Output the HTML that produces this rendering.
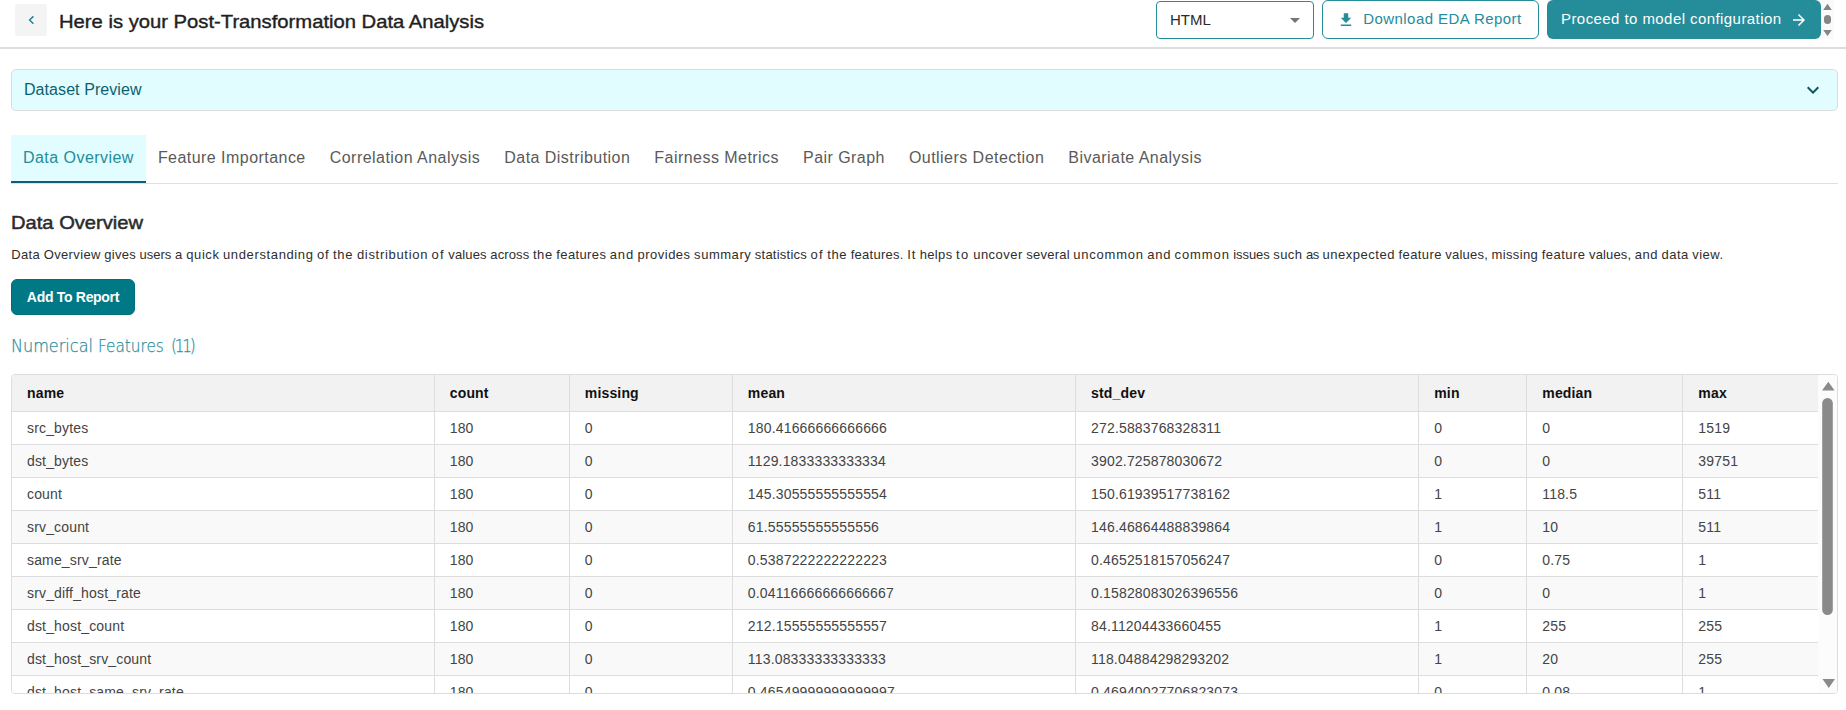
<!DOCTYPE html>
<html lang="en">
<head>
<meta charset="utf-8">
<title>Post-Transformation Data Analysis</title>
<style>
*{box-sizing:border-box;margin:0;padding:0}
html,body{width:1846px;height:710px;overflow:hidden;background:#fff}
body{position:relative;font-family:"Liberation Sans",Arial,sans-serif;color:#333}
.abs{position:absolute}
/* header */
#hdr{position:absolute;left:0;top:0;width:1846px;height:49px;background:#fff;border-bottom:2px solid #ddd}
#back{position:absolute;left:15px;top:4px;width:32px;height:32px;background:#f4f4f4;border-radius:3px}
#back svg{position:absolute;left:12px;top:10px}
#title{position:absolute;left:59px;top:7.6px;height:28px;line-height:28px;font-size:19px;font-weight:normal;-webkit-text-stroke:.4px #1f1f1f;color:#1f1f1f;white-space:nowrap;transform:scaleX(1.064);transform-origin:0 0}
#sel{position:absolute;left:1156px;top:1px;width:158px;height:38px;border:1px solid #258c9a;border-radius:4px;background:#fff}
#sel span{position:absolute;left:13px;top:0;line-height:36px;font-size:15px;color:#2a2a2a}
#sel i{position:absolute;left:133px;top:17px;margin-top:-1px;width:0;height:0;border-left:5px solid transparent;border-right:5px solid transparent;border-top:5px solid #757575}
#dl{position:absolute;left:1322px;top:0;width:217px;height:39px;border:1px solid #258c9a;border-radius:6px;background:#fff;color:#258c9a}
#dl svg{position:absolute;left:14px;top:9.7px}
#dl span{position:absolute;left:40.3px;top:0;line-height:36px;font-size:15px;white-space:nowrap;letter-spacing:.4286px}
#go{position:absolute;left:1547px;top:0;width:274px;height:39px;border-radius:6px;background:#258c9a;color:#fff}
#go span{position:absolute;left:14px;top:0;line-height:37.6px;font-size:15px;white-space:nowrap;letter-spacing:.4286px}
#go svg{position:absolute;left:243px;top:11px}
#sb0{position:absolute;left:1821px;top:0;width:13px;height:39px;background:#fafafa}
/* panel */
#panel{position:absolute;left:11px;top:69px;width:1827px;height:42px;background:#e1fdff;border:1px solid #dcdcdc;border-radius:5px}
#panel span{position:absolute;left:12px;top:0;line-height:39px;font-size:16px;letter-spacing:.07px;color:#0d6170;white-space:nowrap}
#panel svg{position:absolute;left:1789px;top:8px}
/* tabs */
#tabs{position:absolute;left:11px;top:135px;width:1827px;height:49px;border-bottom:1px solid #e0e0e0;white-space:nowrap;font-size:0}
.tab{display:inline-block;height:48px;line-height:45px;padding:0 12px;font-size:16px;letter-spacing:.457px;color:#5a5a5a}
.tab.on{background:#e1fdff;color:#258c9a;border-bottom:2px solid #0d5f73;line-height:45px}
h2{position:absolute;left:11px;top:209px;font-size:19px;line-height:28px;font-weight:normal;-webkit-text-stroke:.5px #2b2b2b;color:#2b2b2b;white-space:nowrap;transform:scaleX(1.06);transform-origin:0 0}
#desc{position:absolute;left:-.7px;top:245.6px;width:1846px;height:18px;font-size:13px;line-height:18px;color:#2e2e2e;white-space:nowrap}
#desc span{position:absolute;top:0}
#add{position:absolute;left:11px;top:279px;width:124px;height:36px;border-radius:6px;background:#007986;border:1px solid #006f7c;color:#fff;font-weight:bold;font-size:14px;letter-spacing:-.3px;line-height:35.4px;text-align:center;white-space:nowrap}
#nf{position:absolute;left:0;top:333px;width:300px;height:26px;font-family:"DejaVu Sans Light","DejaVu Sans","Liberation Sans",sans-serif;font-weight:200;font-size:17px;line-height:26px;color:#2a8f9e;-webkit-text-stroke:.25px #2a8f9e;white-space:nowrap}
#nf span{position:absolute;top:0;transform-origin:0 0}
/* table */
#tw{position:absolute;left:11px;top:374px;width:1827px;height:320px;border:1px solid #ddd;border-radius:4px;overflow:hidden;background:#fcfcfc}
table{position:absolute;left:0;top:0;width:1806px;border-collapse:collapse;table-layout:fixed;font-size:14px}
th,td{height:33px;padding:0 0 0 15px;letter-spacing:.16px;text-align:left;border-bottom:1px solid #ddd;border-left:1px solid #ddd;white-space:nowrap;overflow:hidden;color:#444;font-weight:normal}
th{height:36px;background:#f2f2f2;color:#111;font-weight:bold}
th:first-child,td:first-child{border-left:none}
tr:nth-child(odd) td{background:#f9f9f9}
tr:nth-child(even) td{background:#fff}
</style>
</head>
<body>
<div id="hdr">
  <div id="back"><svg width="8" height="12" viewBox="0 0 8 12"><path d="M6.4 2.4 L2.6 6.05 L6.4 9.7" fill="none" stroke="#1f8694" stroke-width="1.5"/></svg></div>
  <div id="title">Here is your Post-Transformation Data Analysis</div>
  <div id="sel"><span>HTML</span><i></i></div>
  <div id="dl"><svg width="18" height="18" viewBox="0 0 24 24"><path d="M19 9h-4V3H9v6H5l7 7 7-7zM5 18v2h14v-2H5z" fill="#258c9a"/></svg><span>Download EDA Report</span></div>
  <div id="go"><span>Proceed to model configuration</span><svg width="18" height="18" viewBox="0 0 24 24"><path d="M12 4l-1.41 1.41L16.17 11H4v2h12.17l-5.58 5.59L12 20l8-8z" fill="#fff"/></svg></div>
  <div id="sb0"><svg width="13" height="39" viewBox="0 0 13 39"><path d="M2.2 10 L6.5 3.8 L10.8 10z M2.2 30 L10.8 30 L6.5 36z" fill="#858585"/><rect x="3" y="15" width="7" height="9" rx="3.5" fill="#858585"/></svg></div>
</div>

<div id="panel"><span>Dataset Preview</span><svg width="24" height="24" viewBox="0 0 24 24"><path d="M16.59 8.59 12 13.17 7.41 8.59 6 10l6 6 6-6z" fill="#0d5560"/></svg></div>

<div id="tabs"><div class="tab on">Data Overview</div><div class="tab">Feature Importance</div><div class="tab">Correlation Analysis</div><div class="tab">Data Distribution</div><div class="tab">Fairness Metrics</div><div class="tab">Pair Graph</div><div class="tab">Outliers Detection</div><div class="tab">Bivariate Analysis</div></div>

<h2>Data Overview</h2>
<div id="desc"><span style="left:12.0px;letter-spacing:0.34px">Data</span> <span style="left:44.4px;letter-spacing:0.36px">Overview</span> <span style="left:105.0px;letter-spacing:0.28px">gives</span> <span style="left:140.3px;letter-spacing:-0.01px">users</span> <span style="left:175.6px;letter-spacing:0.61px">a</span> <span style="left:187.0px;letter-spacing:0.56px">quick</span> <span style="left:223.7px;letter-spacing:0.63px">understanding</span> <span style="left:317.8px;letter-spacing:0.75px">of</span> <span style="left:333.7px;letter-spacing:0.75px">the</span> <span style="left:357.6px;letter-spacing:0.69px">distribution</span> <span style="left:432.3px;letter-spacing:1.15px">of</span> <span style="left:449.0px;letter-spacing:0.14px">values</span> <span style="left:491.0px;letter-spacing:0.12px">across</span> <span style="left:533.6px;letter-spacing:0.59px">the</span> <span style="left:557.0px;letter-spacing:0.37px">features</span> <span style="left:610.5px;letter-spacing:0.81px">and</span> <span style="left:638.2px;letter-spacing:0.49px">provides</span> <span style="left:694.8px;letter-spacing:0.53px">summary</span> <span style="left:755.5px;letter-spacing:0.23px">statistics</span> <span style="left:811.2px;letter-spacing:1.15px">of</span> <span style="left:827.9px;letter-spacing:0.62px">the</span> <span style="left:851.4px;letter-spacing:0.26px">features.</span> <span style="left:907.9px;letter-spacing:0.85px">It</span> <span style="left:920.4px;letter-spacing:0.35px">helps</span> <span style="left:956.8px;letter-spacing:1.20px">to</span> <span style="left:973.9px;letter-spacing:0.47px">uncover</span> <span style="left:1027.0px;letter-spacing:0.22px">several</span> <span style="left:1074.0px;letter-spacing:0.77px">uncommon</span> <span style="left:1148.0px;letter-spacing:0.68px">and</span> <span style="left:1175.3px;letter-spacing:0.88px">common</span> <span style="left:1234.0px;letter-spacing:-0.09px">issues</span> <span style="left:1273.9px;letter-spacing:0.44px">such</span> <span style="left:1306.7px;letter-spacing:-0.40px">as</span> <span style="left:1323.2px;letter-spacing:0.53px">unexpected</span> <span style="left:1399.3px;letter-spacing:0.38px">feature</span> <span style="left:1446.0px;letter-spacing:0.21px">values,</span> <span style="left:1492.2px;letter-spacing:0.38px">missing</span> <span style="left:1542.5px;letter-spacing:0.45px">feature</span> <span style="left:1589.7px;letter-spacing:0.15px">values,</span> <span style="left:1635.5px;letter-spacing:0.48px">and</span> <span style="left:1662.2px;letter-spacing:0.46px">data</span> <span style="left:1692.9px;letter-spacing:0.48px">view.</span></div>
<div id="add">Add To Report</div>
<div id="nf"><span style="left:10.5px;transform:scaleX(.945)">Numerical</span> <span style="left:97.6px;transform:scaleX(.9)">Features</span> <span style="left:170.5px;letter-spacing:-2.5px;transform:scaleX(.9)">(11)</span></div>

<div id="tw">
<table>
<colgroup><col style="width:422px"><col style="width:135px"><col style="width:163px"><col style="width:343px"><col style="width:343px"><col style="width:108px"><col style="width:156px"><col style="width:135px"></colgroup>
<tr><th>name</th><th>count</th><th>missing</th><th>mean</th><th>std_dev</th><th>min</th><th>median</th><th>max</th></tr>
<tr><td>src_bytes</td><td>180</td><td>0</td><td>180.41666666666666</td><td>272.5883768328311</td><td>0</td><td>0</td><td>1519</td></tr>
<tr><td>dst_bytes</td><td>180</td><td>0</td><td>1129.1833333333334</td><td>3902.725878030672</td><td>0</td><td>0</td><td>39751</td></tr>
<tr><td>count</td><td>180</td><td>0</td><td>145.30555555555554</td><td>150.61939517738162</td><td>1</td><td>118.5</td><td>511</td></tr>
<tr><td>srv_count</td><td>180</td><td>0</td><td>61.55555555555556</td><td>146.46864488839864</td><td>1</td><td>10</td><td>511</td></tr>
<tr><td>same_srv_rate</td><td>180</td><td>0</td><td>0.5387222222222223</td><td>0.4652518157056247</td><td>0</td><td>0.75</td><td>1</td></tr>
<tr><td>srv_diff_host_rate</td><td>180</td><td>0</td><td>0.04116666666666667</td><td>0.15828083026396556</td><td>0</td><td>0</td><td>1</td></tr>
<tr><td>dst_host_count</td><td>180</td><td>0</td><td>212.15555555555557</td><td>84.11204433660455</td><td>1</td><td>255</td><td>255</td></tr>
<tr><td>dst_host_srv_count</td><td>180</td><td>0</td><td>113.08333333333333</td><td>118.04884298293202</td><td>1</td><td>20</td><td>255</td></tr>
<tr><td>dst_host_same_srv_rate</td><td>180</td><td>0</td><td>0.46549999999999997</td><td>0.46940027706823073</td><td>0</td><td>0.08</td><td>1</td></tr>
<tr><td>dst_host_diff_srv_rate</td><td>180</td><td>0</td><td>0.06</td><td>0.1</td><td>0</td><td>0.02</td><td>1</td></tr>
</table>
<svg class="abs" style="left:1807px;top:0" width="19" height="318" viewBox="0 0 19 318"><rect width="19" height="318" fill="#fcfcfc"/><path d="M3 15.5 L9.3 6.8 L15.6 15.5z M3.5 304 L16 304 L9.8 313z" fill="#8a8a8a"/><rect x="3.2" y="23" width="10.6" height="217" rx="5.3" fill="#8a8a8a"/></svg>
</div>
</body>
</html>
